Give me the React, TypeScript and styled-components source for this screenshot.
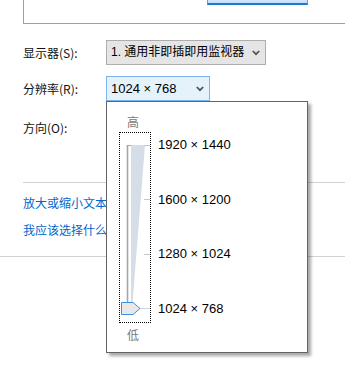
import React from 'react';
import styled, { createGlobalStyle } from 'styled-components';

const GlobalStyle = createGlobalStyle`
    html, body {
        margin: 0;
        padding: 0;
        background: #fff;
        font-family: "Liberation Sans", "Noto Sans CJK SC", sans-serif;
        overflow: hidden;
    }
`;

const Page = styled.div`
    position: relative;
    width: 345px;
    height: 374px;
    overflow: hidden;
    background: #fff;
`;

const Content = styled.div`
    padding-left: 23px;
`;

const PreviewPanel = styled.div`
    height: 23px;
    border-left: 1px solid #a0a0a0;
    border-bottom: 1px solid #a0a0a0;
    padding-left: 183px;
    display: flex;
    align-items: flex-start;
`;

const MonitorButton = styled.div`
    width: 99px;
    height: 3px;
    background: linear-gradient(#d4e9fb, #bcdcf7);
    border: 1px solid #5aa3e3;
    border-top: none;
    border-bottom: 2px solid #1f78d1;
`;

const FormRow = styled.div<{ $top: number }>`
    display: flex;
    align-items: center;
    height: 25px;
    margin-top: ${(p) => p.$top}px;
`;

const Label = styled.div`
    width: 83px;
    font-family: "Noto Sans CJK SC", "Liberation Sans", sans-serif;
    font-size: 12px;
    line-height: 17px;
    color: #111;
`;

const Select = styled.div<{ $width: number; $focused?: boolean }>`
    box-sizing: border-box;
    width: ${(p) => p.$width}px;
    height: 25px;
    display: flex;
    align-items: center;
    justify-content: space-between;
    padding: 0 5px 0 4px;
    background: ${(p) => (p.$focused ? '#e5f1fb' : '#e5e5e5')};
    border: 1px solid ${(p) => (p.$focused ? '#7eb4ea' : '#adadad')};
    color: #000;
`;

const SelectText = styled.span<{ $size: number }>`
    font-size: ${(p) => p.$size}px;
    line-height: 17px;
    white-space: nowrap;
`;

const Separator = styled.div<{ $top: number }>`
    height: 1px;
    background: #d2d2d2;
    margin-top: ${(p) => p.$top}px;
`;

const LinkList = styled.div`
    display: flex;
    flex-direction: column;
    align-items: flex-start;
    gap: 10px;
    padding-top: 11px;
`;

/* the open drop-down covers the rest of each link */
const LinkText = styled.a`
    display: block;
    width: 83px;
    overflow: hidden;
    font-family: "Noto Sans CJK SC", "Liberation Sans", sans-serif;
    font-size: 12px;
    line-height: 17px;
    color: #0066cc;
    text-decoration: none;
    white-space: nowrap;
`;

const Popup = styled.div`
    position: absolute;
    left: 106px;
    top: 101px;
    width: 200px;
    height: 250px;
    background: #fff;
    border: 1px solid #646464;
    box-shadow: 3px 3px 3px rgba(0, 0, 0, 0.35);
    display: flex;
`;

const SliderColumn = styled.div`
    margin-left: 12px;
    width: 32px;
    display: flex;
    flex-direction: column;
`;

const EndLabel = styled.div<{ $top: number }>`
    font-family: "Noto Sans CJK SC", sans-serif;
    font-size: 12px;
    line-height: 17px;
    color: #7a7a7a;
    padding-left: 8px;
    margin-top: ${(p) => p.$top}px;
`;

const FocusBox = styled.div`
    box-sizing: border-box;
    width: 32px;
    height: 191px;
    margin-top: 2px;
    border: 1px dotted #000;
`;

const ResolutionList = styled.div`
    margin-left: 7px;
    padding-top: 35px;
    display: flex;
    flex-direction: column;
    gap: 38.5px;
`;

const Resolution = styled.div`
    font-size: 13px;
    line-height: 16px;
    color: #000;
    white-space: nowrap;
`;

function Chevron() {
    return (
        <svg width="8" height="6" viewBox="0 0 8 6">
            <path d="M0.8 1 L4 4.2 L7.2 1" fill="none" stroke="#505050" strokeWidth="1.7" />
        </svg>
    );
}

function SliderTrack() {
    return (
        <svg width="30" height="189" viewBox="0 0 30 189">
            <polygon points="11,12 25,12 12.5,170 11,170" fill="#d5dde6" />
            <line x1="7.5" y1="12" x2="7.5" y2="172" stroke="#a6a6a6" strokeWidth="1.6" />
            <line x1="7" y1="12.5" x2="11" y2="12.5" stroke="#a6a6a6" strokeWidth="1" />
            {[12.5, 66.5, 121.5].map((y) => (
                <line key={y} x1="24" y1={y} x2="30" y2={y} stroke="#c8c8c8" strokeWidth="1" />
            ))}
            <line x1="19" y1="175.5" x2="30" y2="175.5" stroke="#c8d8e8" strokeWidth="1" />
            <path
                d="M1.5 169.5 H13 L20 175.5 L13 181.5 H1.5 Z"
                fill="#e8e8e8"
                stroke="#3d8ee6"
                strokeWidth="1"
            />
        </svg>
    );
}

const resolutions = ['1920 × 1440', '1600 × 1200', '1280 × 1024', '1024 × 768'];

export default function App(): JSX.Element {
    return (
        <Page>
            <GlobalStyle />
            <Content>
                <PreviewPanel>
                    <MonitorButton />
                </PreviewPanel>
                <FormRow $top={16}>
                    <Label>显示器(S):</Label>
                    <Select $width={160}>
                        <SelectText $size={12}>1. 通用非即插即用监视器</SelectText>
                        <Chevron />
                    </Select>
                </FormRow>
                <FormRow $top={11}>
                    <Label>分辨率(R):</Label>
                    <Select $width={104} $focused>
                        <SelectText $size={13}>1024 × 768</SelectText>
                        <Chevron />
                    </Select>
                </FormRow>
                <FormRow $top={14}>
                    <Label>方向(O):</Label>
                </FormRow>
                <Separator $top={42} />
                <LinkList>
                    <LinkText href="#">放大或缩小文本和其他项目</LinkText>
                    <LinkText href="#">我应该选择什么显示器设置?</LinkText>
                </LinkList>
            </Content>
            <Separator $top={18} />
            <Popup>
                <SliderColumn>
                    <EndLabel $top={11}>高</EndLabel>
                    <FocusBox>
                        <SliderTrack />
                    </FocusBox>
                    <EndLabel $top={3}>低</EndLabel>
                </SliderColumn>
                <ResolutionList>
                    {resolutions.map((r) => (
                        <Resolution key={r}>{r}</Resolution>
                    ))}
                </ResolutionList>
            </Popup>
        </Page>
    );
}
